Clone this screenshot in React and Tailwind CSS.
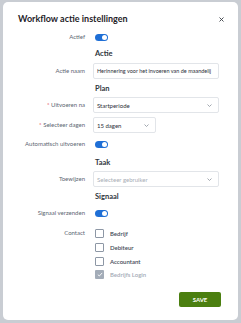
import React from 'react';

const Toggle = () => (
  <div className="w-[13px] h-[7px] rounded-full bg-[#1f6fd6] flex items-center justify-end pr-[1px]">
    <div className="w-[5px] h-[5px] rounded-full bg-white" />
  </div>
);

const Chevron = () => (
  <svg width="5" height="3" viewBox="0 0 5 3" className="shrink-0">
    <path d="M0.5 0.5 L2.5 2.5 L4.5 0.5" fill="none" stroke="#8a929c" strokeWidth="0.8" />
  </svg>
);

const Check = ({ label, checked }) => (
  <div className="flex items-center h-[10px]">
    {checked ? (
      <div className="w-[9px] h-[9px] rounded-[1px] bg-[#a3acb8] flex items-center justify-center">
        <svg width="6" height="5" viewBox="0 0 6 5">
          <path d="M0.8 2.6 L2.3 4 L5.2 0.9" fill="none" stroke="white" strokeWidth="0.9" />
        </svg>
      </div>
    ) : (
      <div className="w-[9px] h-[9px] rounded-[1px] border border-[#8d97a5] bg-white" />
    )}
    <span className={'ml-[6px] text-[6px] font-semibold ' + (checked ? 'text-[#a3abb6]' : 'text-[#434b57]')}>{label}</span>
  </div>
);

const Row = ({ label, required, mt, h, children }) => (
  <div className={'flex items-center ' + mt + ' ' + h}>
    <div className="w-[67px] text-right text-[6px] text-[#5d6673] leading-none">
      {required && <span className="text-[#e0383e]">* </span>}
      {label}
    </div>
    <div className="ml-[8px] flex-1 flex items-center">{children}</div>
  </div>
);

const Heading = ({ mt, children }) => (
  <div className={'flex items-center h-[10px] ' + mt}>
    <div className="w-[67px]" />
    <div className="ml-[10px] text-[7.5px] font-bold text-[#2f3640]">{children}</div>
  </div>
);

export default function App() {
  return (
    <div className="w-[241px] h-[323px] bg-[#c9cdd3] pt-[2px] pl-[3px] font-['Lato',sans-serif]">
      <div className="w-[235px] h-[318px] bg-white rounded-[5px] pt-[11px] px-[15px] pb-[13px] flex flex-col">
        <div className="flex items-center justify-between h-[12px]">
          <span className="text-[9px] font-bold text-[#1f2329]">Workflow actie instellingen</span>
          <svg width="5" height="5" viewBox="0 0 5 5" className="mr-[-1px]">
            <path d="M0.5 0.5 L4.5 4.5 M4.5 0.5 L0.5 4.5" stroke="#3a3f46" strokeWidth="0.9" />
          </svg>
        </div>

        <Row label="Actief" mt="mt-[7px]" h="h-[10px]">
          <div className="ml-[2px]"><Toggle /></div>
        </Row>

        <Heading mt="mt-[7px]">Actie</Heading>

        <Row label="Actie naam" mt="mt-[4px]" h="h-[16px]">
          <div className="w-[126px] h-[16px] border border-[#e2e5e9] rounded-[2px] flex items-center px-[3px] overflow-hidden">
            <span className="text-[5.5px] text-[#2b3038] whitespace-nowrap">Herinnering voor het invoeren van de maandelij</span>
          </div>
        </Row>

        <Heading mt="mt-[5px]">Plan</Heading>

        <Row label="Uitvoeren na" required mt="mt-[3px]" h="h-[16px]">
          <div className="w-[126px] h-[16px] border border-[#e2e5e9] rounded-[2px] flex items-center justify-between pl-[3px] pr-[6px]">
            <span className="text-[6px] text-[#2b3038]">Startperiode</span>
            <Chevron />
          </div>
        </Row>

        <Row label="Selecteer dagen" required mt="mt-[4px]" h="h-[16px]">
          <div className="w-[63px] h-[16px] border border-[#e2e5e9] rounded-[2px] flex items-center justify-between pl-[3px] pr-[6px]">
            <span className="text-[6px] text-[#2b3038]">15 dagen</span>
            <Chevron />
          </div>
        </Row>

        <Row label="Automatisch uitvoeren" mt="mt-[6px]" h="h-[10px]">
          <div className="ml-[2px]"><Toggle /></div>
        </Row>

        <Heading mt="mt-[9px]">Taak</Heading>

        <Row label="Toewijzen" mt="mt-[3px]" h="h-[16px]">
          <div className="w-[126px] h-[16px] border border-[#e2e5e9] rounded-[2px] flex items-center justify-between pl-[3px] pr-[6px]">
            <span className="text-[6px] text-[#a7adb5]">Selecteer gebruiker</span>
            <Chevron />
          </div>
        </Row>

        <Heading mt="mt-[5px]">Signaal</Heading>

        <Row label="Signaal verzenden" mt="mt-[6px]" h="h-[10px]">
          <div className="ml-[2px]"><Toggle /></div>
        </Row>

        <Row label="Contact" mt="mt-[10px]" h="h-[10px]">
          <div className="ml-[2px]"><Check label="Bedrijf" /></div>
        </Row>
        <Row label="" mt="mt-[4px]" h="h-[10px]">
          <div className="ml-[2px]"><Check label="Debiteur" /></div>
        </Row>
        <Row label="" mt="mt-[4px]" h="h-[10px]">
          <div className="ml-[2px]"><Check label="Accountant" /></div>
        </Row>
        <Row label="" mt="mt-[3px]" h="h-[10px]">
          <div className="ml-[2px]"><Check label="Bedrijfs Login" checked /></div>
        </Row>

        <div className="mt-[13px] flex justify-end pr-[2px]">
          <button className="w-[42px] h-[15px] bg-[#4b7f10] rounded-[2px] text-white text-[6px] font-bold flex items-center justify-center">
            SAVE
          </button>
        </div>
      </div>
    </div>
  );
}
